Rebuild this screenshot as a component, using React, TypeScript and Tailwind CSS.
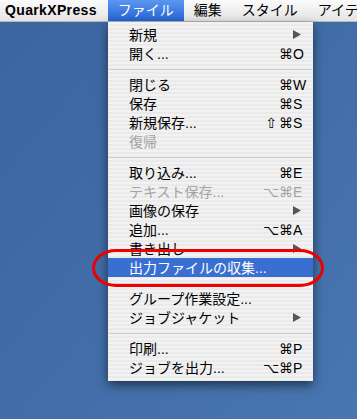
import React from "react";

type Item =
  | { type: "sep" }
  | {
      type: "item";
      label: string;
      mod?: string;
      key?: string;
      arrow?: boolean;
      disabled?: boolean;
      active?: boolean;
    };

const items: Item[] = [
  { type: "item", label: "新規", arrow: true },
  { type: "item", label: "開く...", key: "O" },
  { type: "sep" },
  { type: "item", label: "閉じる", key: "W" },
  { type: "item", label: "保存", key: "S" },
  { type: "item", label: "新規保存...", mod: "⇧", key: "S" },
  { type: "item", label: "復帰", disabled: true },
  { type: "sep" },
  { type: "item", label: "取り込み...", key: "E" },
  { type: "item", label: "テキスト保存...", mod: "⌥", key: "E", disabled: true },
  { type: "item", label: "画像の保存", arrow: true },
  { type: "item", label: "追加...", mod: "⌥", key: "A" },
  { type: "item", label: "書き出し", arrow: true },
  { type: "item", label: "出力ファイルの収集...", active: true },
  { type: "sep" },
  { type: "item", label: "グループ作業設定..." },
  { type: "item", label: "ジョブジャケット", arrow: true },
  { type: "sep" },
  { type: "item", label: "印刷...", key: "P" },
  { type: "item", label: "ジョブを出力...", mod: "⌥", key: "P" },
];

const font = {
  fontFamily:
    '"Liberation Sans", "DejaVu Sans", "Noto Sans CJK JP", sans-serif',
};

function Arrow({ active }: { active?: boolean }) {
  return (
    <svg width="8" height="9" viewBox="0 0 8 9" className="block">
      <polygon points="0,0 8,4.5 0,9" fill={active ? "#fff" : "#555"} />
    </svg>
  );
}

export default function App() {
  return (
    <div
      className="relative w-[357px] h-[419px] overflow-hidden bg-gradient-to-br from-[#3a659f] to-[#4876b0] text-[14px] text-black"
      style={font}
    >
      {/* Menu bar */}
      <div className="flex h-[22px] items-stretch overflow-hidden whitespace-nowrap border-b border-[#b8b8b8] bg-gradient-to-b from-[#fbfbfb] to-[#e4e4e4]">
        <div className="flex shrink-0 items-center pl-[5px] pr-[11px] font-bold tracking-[0.35px]">
          QuarkXPress
        </div>
        <div className="flex shrink-0 items-center px-[10px] bg-gradient-to-b from-[#5b97ee] to-[#2563d6] text-white">
          ファイル
        </div>
        <div className="flex shrink-0 items-center px-[10px]">編集</div>
        <div className="flex shrink-0 items-center px-[10px]">スタイル</div>
        <div className="flex shrink-0 items-center px-[10px]">アイテム</div>
      </div>

      {/* Dropdown menu */}
      <div className="absolute left-[108px] top-[22px] w-[205px] pt-[3px] pb-[4px] bg-[repeating-linear-gradient(to_bottom,#f2f2f2_0px,#f2f2f2_2px,#eaeaea_2px,#eaeaea_4px)] shadow-[0_4px_10px_rgba(0,0,0,0.55)]">
        {items.map((it, i) =>
          it.type === "sep" ? (
            <div key={i} className="flex h-[12px] items-center px-[1px]">
              <div className="h-[1px] w-full bg-[#cdcdcd]" />
            </div>
          ) : (
            <div
              key={i}
              className={`flex h-[19px] items-center pl-[21px] pr-[11px] ${
                it.active ? "bg-[#3a6fd2] text-white" : ""
              } ${it.disabled ? "text-[#a3a3a3]" : ""}`}
            >
              <div className="flex-1 whitespace-nowrap leading-none">{it.label}</div>
              {it.arrow ? (
                <div className="flex w-[23px] justify-end pr-[1px]">
                  <Arrow active={it.active} />
                </div>
              ) : it.key ? (
                <div className="flex items-center leading-none">
                  <span className="w-[16px] text-right pr-[2px]">{it.mod ?? ""}</span>
                  <span className="w-[23px] whitespace-nowrap">⌘{it.key}</span>
                </div>
              ) : null}
            </div>
          )
        )}
      </div>

      {/* Red annotation ellipse */}
      <div className="absolute left-[92px] top-[249px] w-[232px] h-[38px] rounded-[24px/19px] border-[3px] border-[#ee0000]" />
    </div>
  );
}
